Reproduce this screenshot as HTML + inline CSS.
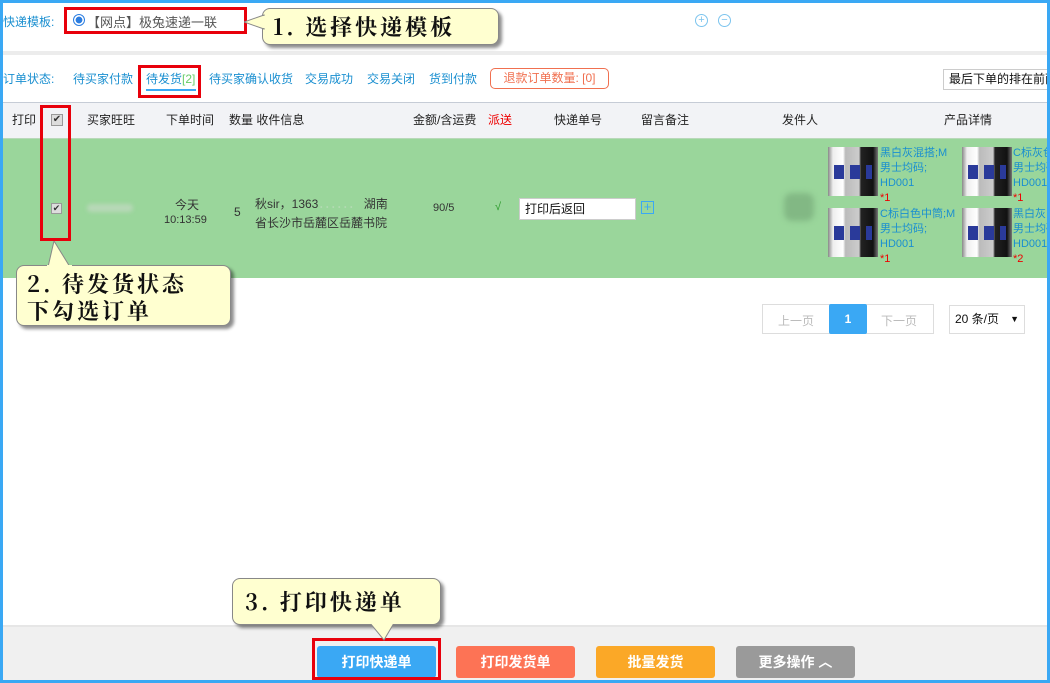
<!DOCTYPE html>
<html><head><meta charset="utf-8"><style>
*{margin:0;padding:0;box-sizing:border-box}
body{width:1050px;height:683px;overflow:hidden;background:#3aa8f4;font-family:"Liberation Sans","Noto Sans CJK SC",sans-serif;font-size:12px;color:#333;position:relative}
.main{position:absolute;left:3px;top:3px;width:1044px;height:677px;background:#fff;overflow:hidden}
.abs{position:absolute;white-space:nowrap}
.tab{position:absolute;top:67px;color:#1a8fd0;font-size:12px}
.hd{position:absolute;top:108px;font-size:12px;color:#222}
.red{position:absolute;border:3px solid #e8000b}
.call{position:absolute;background:#ffffd0;border:1px solid #888;border-radius:8px;box-shadow:3px 3px 3px rgba(0,0,0,.45);font-family:"Noto Serif CJK SC","Liberation Serif",serif;font-size:22px;font-weight:bold;color:#111;letter-spacing:3px;white-space:nowrap}
.btn{position:absolute;top:643px;height:32px;width:119px;border-radius:3px;color:#fff;font-weight:bold;font-size:14px;text-align:center;line-height:32px}
.sock{position:absolute;width:50px;height:49px;background:linear-gradient(90deg,#888 0,#eee 10%,#fff 30%,#bbb 35%,#ccc 62%,#222 66%,#111 90%,#777 100%)}
.sock:after{content:"";position:absolute;left:6px;top:18px;width:38px;height:14px;background:repeating-linear-gradient(90deg,#2a3a9a 0 10px,transparent 10px 16px)}
.pt{position:absolute;color:#1a8fd0;font-size:11px;line-height:15px;white-space:nowrap;overflow:hidden;font-family:"Liberation Sans","Noto Sans CJK SC",sans-serif}
</style></head><body>
<div class="main">
<div class="abs" style="left:0;top:10px;color:#1a8fd0">快递模板:</div>
<div class="abs" style="left:70px;top:11px;width:12px;height:12px;border-radius:50%;border:1px solid #2b7de0;background:radial-gradient(#2b7de0 45%,#fff 50%)"></div>
<div class="abs" style="left:84px;top:9px;color:#555;font-size:13px">【网点】极兔速递一联</div>
<div class="abs" style="left:692px;top:11px;width:13px;height:13px;border:1px solid #7cc4ee;border-radius:50%;color:#7cc4ee;font-size:11px;line-height:11px;text-align:center">+</div>
<div class="abs" style="left:715px;top:11px;width:13px;height:13px;border:1px solid #7cc4ee;border-radius:50%;color:#7cc4ee;font-size:11px;line-height:10px;text-align:center">−</div>
<div class="abs" style="left:0;top:48px;width:1044px;height:4px;background:#ececec"></div>
<div class="abs" style="left:0;top:67px;color:#1a8fd0">订单状态:</div>
<div class="tab" style="left:70px">待买家付款</div>
<div class="tab" style="left:143px">待发货<span style="color:#6c6">[2]</span></div>
<div class="abs" style="left:143px;top:86px;width:50px;height:2px;background:#3aa8f4"></div>
<div class="tab" style="left:206px">待买家确认收货</div>
<div class="tab" style="left:302px">交易成功</div>
<div class="tab" style="left:364px">交易关闭</div>
<div class="tab" style="left:426px">货到付款</div>
<div class="abs" style="left:487px;top:65px;width:119px;height:21px;border:1px solid #f07050;border-radius:5px;color:#f07050;line-height:19px;text-align:center">退款订单数量: [0]</div>
<div class="abs" style="left:940px;top:66px;width:110px;height:21px;border:1px solid #ccc;line-height:19px;padding-left:5px;color:#111;overflow:hidden">最后下单的排在前面</div>
<div class="abs" style="left:0;top:99px;width:1044px;height:37px;background:#f2f3f6;border-top:1px solid #c6ccd6;border-bottom:1px solid #b9d8b9"></div>
<div class="hd" style="left:9px">打印</div>
<div class="abs" style="left:48px;top:111px;width:12px;height:12px;border:1px solid #999;background:#ddd;font-size:10px;line-height:10px;text-align:center">✔</div>
<div class="hd" style="left:84px">买家旺旺</div>
<div class="hd" style="left:163px">下单时间</div>
<div class="hd" style="left:226px">数量 收件信息</div>
<div class="hd" style="left:410px">金额/含运费</div>
<div class="hd" style="left:485px;color:#e00">派送</div>
<div class="hd" style="left:551px">快递单号</div>
<div class="hd" style="left:638px">留言备注</div>
<div class="hd" style="left:779px">发件人</div>
<div class="hd" style="left:941px">产品详情</div>
<div class="abs" style="left:0;top:136px;width:1044px;height:139px;background:#9ad69b"></div>
<div class="abs" style="left:48px;top:200px;width:11px;height:11px;border:1px solid #999;background:#ddd;font-size:9px;line-height:9px;text-align:center">✔</div>
<div class="abs" style="left:84px;top:201px;width:46px;height:8px;background:#b8d8b8;border-radius:4px;filter:blur(2px)"></div>
<div class="abs" style="left:172px;top:193px;font-size:12px">今天</div>
<div class="abs" style="left:161px;top:211px;font-size:11px">10:13:59</div>
<div class="abs" style="left:231px;top:202px">5</div>
<div class="abs" style="left:252px;top:192px;line-height:19px;font-size:12px">秋sir，1363<span style="color:#b5dcb5">．．．．．．</span> 湖南<br>省长沙市岳麓区岳麓书院</div>
<div class="abs" style="left:430px;top:199px;font-size:11px">90/5</div>
<div class="abs" style="left:492px;top:198px;color:#2a9a2a;font-size:11px">√</div>
<div class="abs" style="left:516px;top:195px;width:117px;height:22px;background:#fff;border:1px solid #ccc;line-height:20px;padding-left:5px;color:#111">打印后返回</div>
<div class="abs" style="left:638px;top:198px;width:13px;height:13px;border:1px solid #3aa8f4;color:#3aa8f4;line-height:10px;text-align:center;font-size:13px">+</div>
<div class="abs" style="left:781px;top:190px;width:30px;height:28px;background:#82b884;border-radius:8px;filter:blur(3px)"></div>
<div class="sock" style="left:825px;top:144px"></div>
<div class="pt" style="left:877px;top:143px;width:80px">黑白灰混搭;M<br>男士均码;<br>HD001<br><span style="color:#e00">*1</span></div>
<div class="sock" style="left:959px;top:144px"></div>
<div class="pt" style="left:1010px;top:143px;width:34px">C标灰色<br>男士均码<br>HD001<br><span style="color:#e00">*1</span></div>
<div class="sock" style="left:825px;top:205px"></div>
<div class="pt" style="left:877px;top:204px;width:80px">C标白色中筒;M<br>男士均码;<br>HD001<br><span style="color:#e00">*1</span></div>
<div class="sock" style="left:959px;top:205px"></div>
<div class="pt" style="left:1010px;top:204px;width:34px">黑白灰<br>男士均码<br>HD001<br><span style="color:#e00">*2</span></div>
<div class="abs" style="left:759px;top:301px;width:172px;height:30px;border:1px solid #ddd"></div>
<div class="abs" style="left:775px;top:309px;color:#bbb">上一页</div>
<div class="abs" style="left:826px;top:301px;width:38px;height:30px;background:#3aa8f4;color:#fff;font-weight:bold;text-align:center;line-height:30px;border-radius:2px">1</div>
<div class="abs" style="left:878px;top:309px;color:#bbb">下一页</div>
<div class="abs" style="left:946px;top:302px;width:76px;height:29px;border:1px solid #ddd;line-height:27px;padding-left:5px;color:#111">20 条/页 <span style="position:absolute;right:5px;font-size:9px">▼</span></div>
<div class="abs" style="left:0;top:622px;width:1044px;height:55px;background:#f0f0f0;border-top:2px solid #e6e6e6"></div>
<div class="btn" style="left:314px;background:#3aa8f4">打印快递单</div>
<div class="btn" style="left:453px;background:#fd7355">打印发货单</div>
<div class="btn" style="left:593px;background:#fba827">批量发货</div>
<div class="btn" style="left:733px;background:#9a9a9a">更多操作 ︿</div>
</div>
<div class="red" style="left:64px;top:7px;width:183px;height:27px"></div>
<div class="red" style="left:138px;top:65px;width:63px;height:33px"></div>
<div class="red" style="left:40px;top:105px;width:31px;height:136px"></div>
<div class="red" style="left:312px;top:638px;width:129px;height:42px"></div>
<div class="call" style="left:262px;top:8px;width:237px;height:37px;line-height:35px;padding-left:10px">1. 选择快递模板</div>
<svg class="abs" style="left:244px;top:14px" width="22" height="16"><polygon points="0,8 20,1 20,15" fill="#ffffd0" stroke="#888"/><rect x="19" y="2" width="4" height="12" fill="#ffffd0"/></svg>
<div class="call" style="left:16px;top:265px;width:215px;height:61px;line-height:27px;padding:4px 0 0 10px">2. 待发货状态<br>下勾选订单</div>
<svg class="abs" style="left:44px;top:241px" width="30" height="27"><polygon points="10,0 4,26 26,26" fill="#ffffd0" stroke="#888"/><rect x="3" y="24" width="25" height="4" fill="#ffffd0"/></svg>
<div class="call" style="left:232px;top:578px;width:209px;height:47px;line-height:45px;padding-left:12px">3. 打印快递单</div>
<svg class="abs" style="left:368px;top:623px" width="30" height="18"><polygon points="2,0 26,0 16,17" fill="#ffffd0" stroke="#888"/><rect x="1" y="-3" width="28" height="4" fill="#ffffd0"/></svg>
</body></html>
